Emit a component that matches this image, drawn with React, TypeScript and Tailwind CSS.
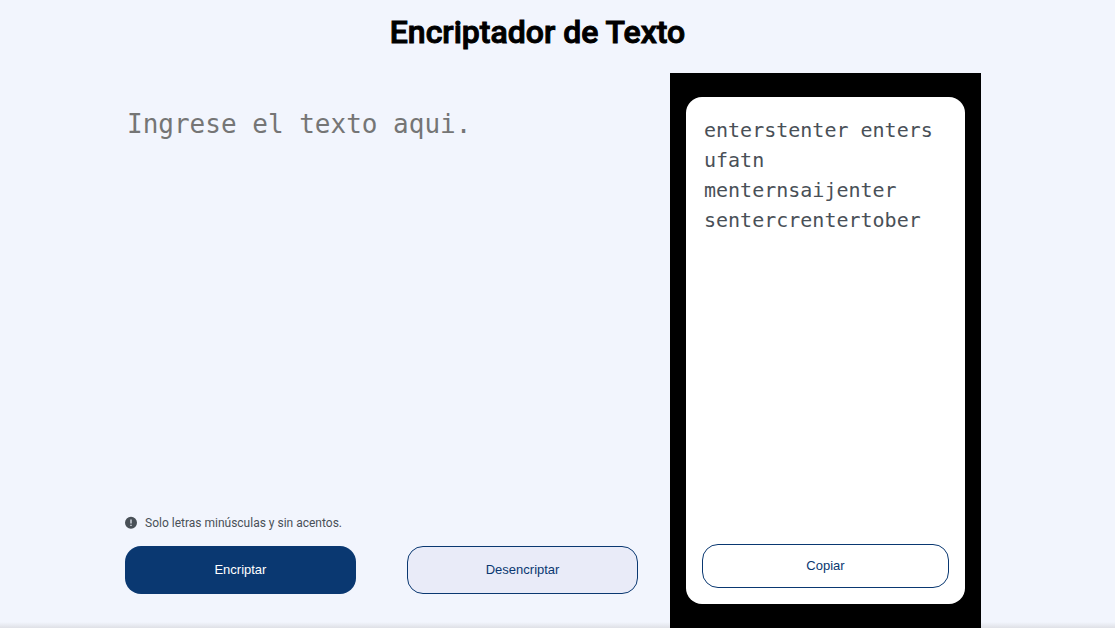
import { useState } from "react";

const PAIRS: [string, string][] = [
  ["e", "enter"],
  ["i", "imes"],
  ["a", "ai"],
  ["o", "ober"],
  ["u", "ufat"],
];

function encrypt(text: string) {
  return text.replace(/[eiaou]/g, (c) => PAIRS.find(([k]) => k === c)![1]);
}

function decrypt(text: string) {
  return PAIRS.reduce((t, [k, v]) => t.split(v).join(k), text);
}

function AlertIcon() {
  return (
    <svg className="size-4" viewBox="0 0 16 16" aria-hidden="true">
      <path
        fill="#495057"
        fillRule="evenodd"
        d="M8 1.7a6 6 0 1 0 0 12A6 6 0 0 0 8 1.7Zm-.6 2.8h1.2v4H7.4v-4Zm0 5.2h1.2v1.2H7.4V9.7Z"
      />
    </svg>
  );
}

export default function App() {
  const [text, setText] = useState("");
  const [result, setResult] = useState("enterstenter enters ufatn menternsaijenter sentercrentertober");

  return (
    <div className="flex min-h-screen flex-col bg-[linear-gradient(to_top,#dfe0e6,#f2f5fd_6px)] font-[Roboto,sans-serif] antialiased">
      <header className="pt-3 pr-10 pb-5 text-center">
        <h1 className="text-[32px] leading-[41px] font-medium text-black [-webkit-text-stroke:1px_black]">
          Encriptador de Texto
        </h1>
      </header>
      <main className="flex flex-1 gap-8 pr-[134px] pl-[125px]">
        <section className="flex flex-1 flex-col pt-[34px] pb-[34px]">
          <textarea
            aria-label="Texto"
            className="w-full flex-1 resize-none p-0.5 font-['DejaVu_Sans_Mono',monospace] text-[26px] leading-[31px] text-[#495057] outline-none placeholder:text-[#757575]"
            placeholder="Ingrese el texto aqui."
            value={text}
            onChange={(e) => setText(e.target.value)}
          />
          <p className="-ml-0.5 flex items-center gap-1.5 pb-3.5 text-xs leading-[18px] text-[#495057]">
            <AlertIcon />
            Solo letras minúsculas y sin acentos.
          </p>
          <div className="flex justify-between font-['Liberation_Sans',sans-serif] text-[13px]">
            <button
              type="button"
              className="h-12 w-[45%] rounded-2xl bg-[#0a3871] text-white"
              onClick={() => setResult(encrypt(text))}
            >
              Encriptar
            </button>
            <button
              type="button"
              className="h-12 w-[45%] rounded-2xl border border-[#0a3871] bg-[#e9ebf8] text-[#0a3871]"
              onClick={() => setResult(decrypt(text))}
            >
              Desencriptar
            </button>
          </div>
        </section>
        <aside className="flex w-[311px] bg-black px-4 py-6">
          <div className="flex flex-1 flex-col rounded-2xl bg-white p-4">
            <textarea
              aria-label="Resultado"
              readOnly
              className="w-full flex-1 resize-none p-0.5 font-['DejaVu_Sans_Mono',monospace] text-xl leading-[30px] text-[#495057] outline-none"
              value={result}
            />
            <button
              type="button"
              className="h-11 w-full rounded-2xl border border-[#0a3871] bg-white font-['Liberation_Sans',sans-serif] text-[13px] text-[#0a3871]"
              onClick={() => navigator.clipboard?.writeText(result)}
            >
              Copiar
            </button>
          </div>
        </aside>
      </main>
    </div>
  );
}
